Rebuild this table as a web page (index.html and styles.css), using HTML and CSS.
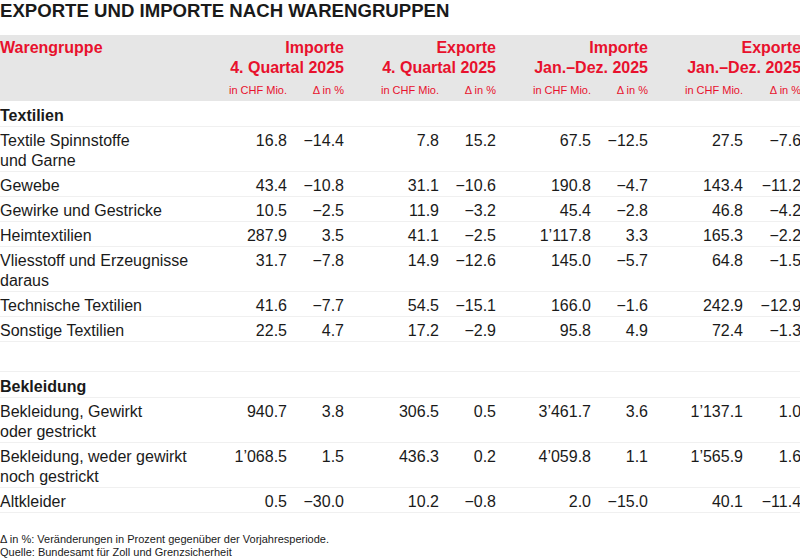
FILE: index.html
```html
<!DOCTYPE html>
<html>
<head>
<meta charset="utf-8">
<title>Exporte und Importe nach Warengruppen</title>
<link rel="stylesheet" href="styles.css">
</head>
<body>

<h1 class="title">EXPORTE UND IMPORTE NACH WARENGRUPPEN</h1>

<table class="trade">
<colgroup>
<col class="c-name">
<col class="c-val"><col class="c-pct">
<col class="c-val"><col class="c-pct">
<col class="c-val"><col class="c-pct">
<col class="c-val"><col class="c-pct-last">
</colgroup>
<thead>
<tr class="head">
<th class="name">Warengruppe</th>
<th colspan="2">Importe<br>4. Quartal 2025</th>
<th colspan="2">Exporte<br>4. Quartal 2025</th>
<th colspan="2">Importe<br>Jan.–Dez. 2025</th>
<th colspan="2">Exporte<br>Jan.–Dez. 2025</th>
</tr>
<tr class="unit">
<th></th>
<th>in CHF Mio.</th><th>Δ in %</th>
<th>in CHF Mio.</th><th>Δ in %</th>
<th>in CHF Mio.</th><th>Δ in %</th>
<th>in CHF Mio.</th><th>Δ in %</th>
</tr>
</thead>
<tbody>
<tr class="group"><td colspan="9">Textilien</td></tr>
<tr><td>Textile Spinnstoffe<br>und Garne</td><td>16.8</td><td>−14.4</td><td>7.8</td><td>15.2</td><td>67.5</td><td>−12.5</td><td>27.5</td><td>−7.6</td></tr>
<tr><td>Gewebe</td><td>43.4</td><td>−10.8</td><td>31.1</td><td>−10.6</td><td>190.8</td><td>−4.7</td><td>143.4</td><td>−11.2</td></tr>
<tr><td>Gewirke und Gestricke</td><td>10.5</td><td>−2.5</td><td>11.9</td><td>−3.2</td><td>45.4</td><td>−2.8</td><td>46.8</td><td>−4.2</td></tr>
<tr><td>Heimtextilien</td><td>287.9</td><td>3.5</td><td>41.1</td><td>−2.5</td><td>1’117.8</td><td>3.3</td><td>165.3</td><td>−2.2</td></tr>
<tr><td>Vliesstoff und Erzeugnisse<br>daraus</td><td>31.7</td><td>−7.8</td><td>14.9</td><td>−12.6</td><td>145.0</td><td>−5.7</td><td>64.8</td><td>−1.5</td></tr>
<tr><td>Technische Textilien</td><td>41.6</td><td>−7.7</td><td>54.5</td><td>−15.1</td><td>166.0</td><td>−1.6</td><td>242.9</td><td>−12.9</td></tr>
<tr><td>Sonstige Textilien</td><td>22.5</td><td>4.7</td><td>17.2</td><td>−2.9</td><td>95.8</td><td>4.9</td><td>72.4</td><td>−1.3</td></tr>
<tr class="blank"><td colspan="9"></td></tr>
<tr class="group"><td colspan="9">Bekleidung</td></tr>
<tr><td>Bekleidung, Gewirkt<br>oder gestrickt</td><td>940.7</td><td>3.8</td><td>306.5</td><td>0.5</td><td>3’461.7</td><td>3.6</td><td>1’137.1</td><td>1.0</td></tr>
<tr><td>Bekleidung, weder gewirkt<br>noch gestrickt</td><td>1’068.5</td><td>1.5</td><td>436.3</td><td>0.2</td><td>4’059.8</td><td>1.1</td><td>1’565.9</td><td>1.6</td></tr>
<tr><td>Altkleider</td><td>0.5</td><td>−30.0</td><td>10.2</td><td>−0.8</td><td>2.0</td><td>−15.0</td><td>40.1</td><td>−11.4</td></tr>
</tbody>
</table>

<p class="note">Δ in %: Veränderungen in Prozent gegenüber der Vorjahresperiode.<br>
Quelle: Bundesamt für Zoll und Grenzsicherheit</p>

</body>
</html>
```

FILE: styles.css
```css
body {margin:0; font-family:"Liberation Sans", Arial, sans-serif; color:#1a1a1a; background:#fff; overflow:hidden;}

.title {margin:0; padding-top:1px; height:34px; font-size:18.6px; line-height:20px; font-weight:700;}

.trade {width:801px; table-layout:fixed; border-collapse:collapse;}
.c-name {width:192px;}
.c-val {width:95px;}
.c-pct {width:57px;}
.c-pct-last {width:58px;}

.trade th {color:#e8112d; font-weight:700; text-align:right; background:#e6e6e6; padding:0; white-space:nowrap;}
.head th {font-size:16px; line-height:20px; padding-top:3px; vertical-align:top;}
.head th.name {text-align:left;}
.unit th {font-size:11px; line-height:14px; font-weight:400; padding:5px 0 4px;}

.trade td {font-size:16px; line-height:20px; padding:4px 0 0; text-align:right; border-bottom:1px solid #f0f0f0; vertical-align:top; white-space:nowrap;}
.trade td:first-child {text-align:left;}
.group td {font-weight:700; padding-top:5px;}
.blank td {height:25px;}

.note {margin:20px 0 0; font-size:11px; line-height:13px;}
```
